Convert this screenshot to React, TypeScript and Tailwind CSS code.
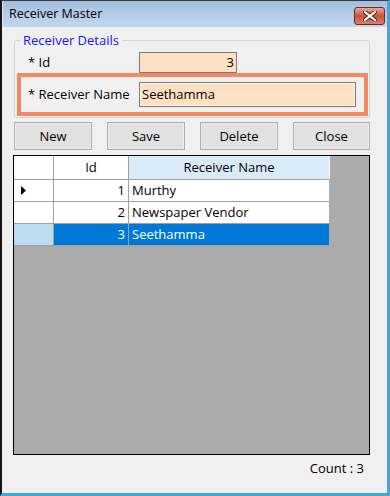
import React from 'react';

const rows = [
  { id: 1, name: 'Murthy' },
  { id: 2, name: 'Newspaper Vendor' },
  { id: 3, name: 'Seethamma' },
];

const font = { fontFamily: '"Open Sans", "Noto Sans", sans-serif' };

const Btn: React.FC<{ label: string; w?: string }> = ({ label, w = 'w-[78px]' }) => (
  <button
    className={`${w} h-[28px] bg-[#e1e1e1] border border-[#adadad] shadow-[inset_0_0_0_1px_#ececec] text-[13px] text-black leading-none`}
  >
    {label}
  </button>
);

export default function App() {
  const selected = 3;
  const current = 1;

  return (
    <div className="w-[390px] h-[496px] overflow-hidden bg-white" style={font}>
      <div className="h-full flex flex-col border-t border-t-[#3a3a3a] border-l-2 border-l-[#161616] border-r-[3px] border-r-[#4aa3d9] border-b-[3px] border-b-[#4aa3d9]">
        {/* Title bar */}
        <div className="h-[26px] shrink-0 flex items-start justify-between bg-gradient-to-b from-[#a3bede] to-[#c4d9f0] pl-[6px] pr-[2px] border-l border-l-[#dce8f5]">
          <span className="text-[12.5px] text-black mt-[5px] leading-[16px]">Receiver Master</span>
          <div className="mt-[6px] w-[31px] h-[18px] rounded-[3px] border border-[#6e2a22] bg-gradient-to-b from-[#e9a798] via-[#c9523c] to-[#d98068] flex items-center justify-center">
            <svg width="14" height="10" viewBox="0 0 14 10">
              <path d="M2 1 L12 9 M12 1 L2 9" stroke="#4a1a14" strokeWidth="4" strokeLinecap="square" />
              <path d="M2 1 L12 9 M12 1 L2 9" stroke="#ffffff" strokeWidth="2.2" strokeLinecap="square" />
            </svg>
          </div>
        </div>

        {/* Body */}
        <div className="flex-1 flex flex-col bg-[#f0f0f0] pl-[12px] pr-[17px] pt-[13px] text-[13px] text-black">
          {/* Group box */}
          <div className="relative border border-[#d5d5d5] rounded-[3px] pt-[11px] pb-px">
            <span className="absolute -top-[10px] left-[5px] px-[3px] bg-[#f0f0f0] text-[13px] leading-[18px] text-[#1616f5]">
              Receiver Details
            </span>
            <div className="flex items-center h-[21px]">
              <span className="w-[124px] pl-[13px] leading-none">* Id</span>
              <div className="w-[98px] h-[21px] border border-[#7a7a7a] bg-[#ffe0c2] text-right pr-[2px] leading-[19px]">
                3
              </div>
            </div>
            <div className="ml-[2px] mr-px border-4 border-[#f58864] flex items-center h-[43px]">
              <span className="w-[118px] pl-[7px] leading-none">* Receiver Name</span>
              <div className="w-[217px] h-[25px] border border-[#7a7a7a] bg-[#ffe0c2] shadow-[inset_0_0_0_1px_#fff4ea] pl-[2px] leading-[23px]">
                Seethamma
              </div>
            </div>
          </div>

          {/* Buttons */}
          <div className="flex justify-between mt-[4px]">
            <Btn label="New" />
            <Btn label="Save" />
            <Btn label="Delete" />
            <Btn label="Close" w="w-[77px]" />
          </div>

          {/* Grid */}
          <div className="mt-[5px] -ml-px h-[300px] border border-black bg-[#ababab]">
            <div className="w-[316px]">
              <div className="flex h-[24px] bg-white border-b border-[#a0a0a0]">
                <div className="w-[40px] border-r border-[#a0a0a0]" />
                <div className="w-[75px] border-r border-[#a0a0a0] flex items-center justify-center">Id</div>
                <div className="w-[200px] bg-[#d9eaf8] flex items-center justify-center">Receiver Name</div>
              </div>
              {rows.map((r) => {
                const sel = r.id === selected;
                return (
                  <div key={r.id} className="flex h-[22px] border-b border-[#a0a0a0]">
                    <div
                      className={`w-[40px] border-r border-[#a0a0a0] flex items-center pl-[7px] ${
                        sel ? 'bg-[#bcdcf4]' : 'bg-white'
                      }`}
                    >
                      {r.id === current && (
                        <svg width="5" height="9" viewBox="0 0 5 9">
                          <path d="M0 0 L5 4.5 L0 9 Z" fill="#000" />
                        </svg>
                      )}
                    </div>
                    <div
                      className={`w-[75px] border-r border-[#a0a0a0] flex items-center justify-end pr-[3px] ${
                        sel ? 'bg-[#0078d7] text-white' : 'bg-white'
                      }`}
                    >
                      {r.id}
                    </div>
                    <div
                      className={`w-[200px] flex items-center pl-[3px] ${
                        sel ? 'bg-[#0078d7] text-white' : 'bg-white'
                      }`}
                    >
                      {r.name}
                    </div>
                  </div>
                );
              })}
            </div>
          </div>

          <div className="flex justify-end pr-[6px] mt-[4px] leading-[18px]">Count : {rows.length}</div>
        </div>
      </div>
    </div>
  );
}
